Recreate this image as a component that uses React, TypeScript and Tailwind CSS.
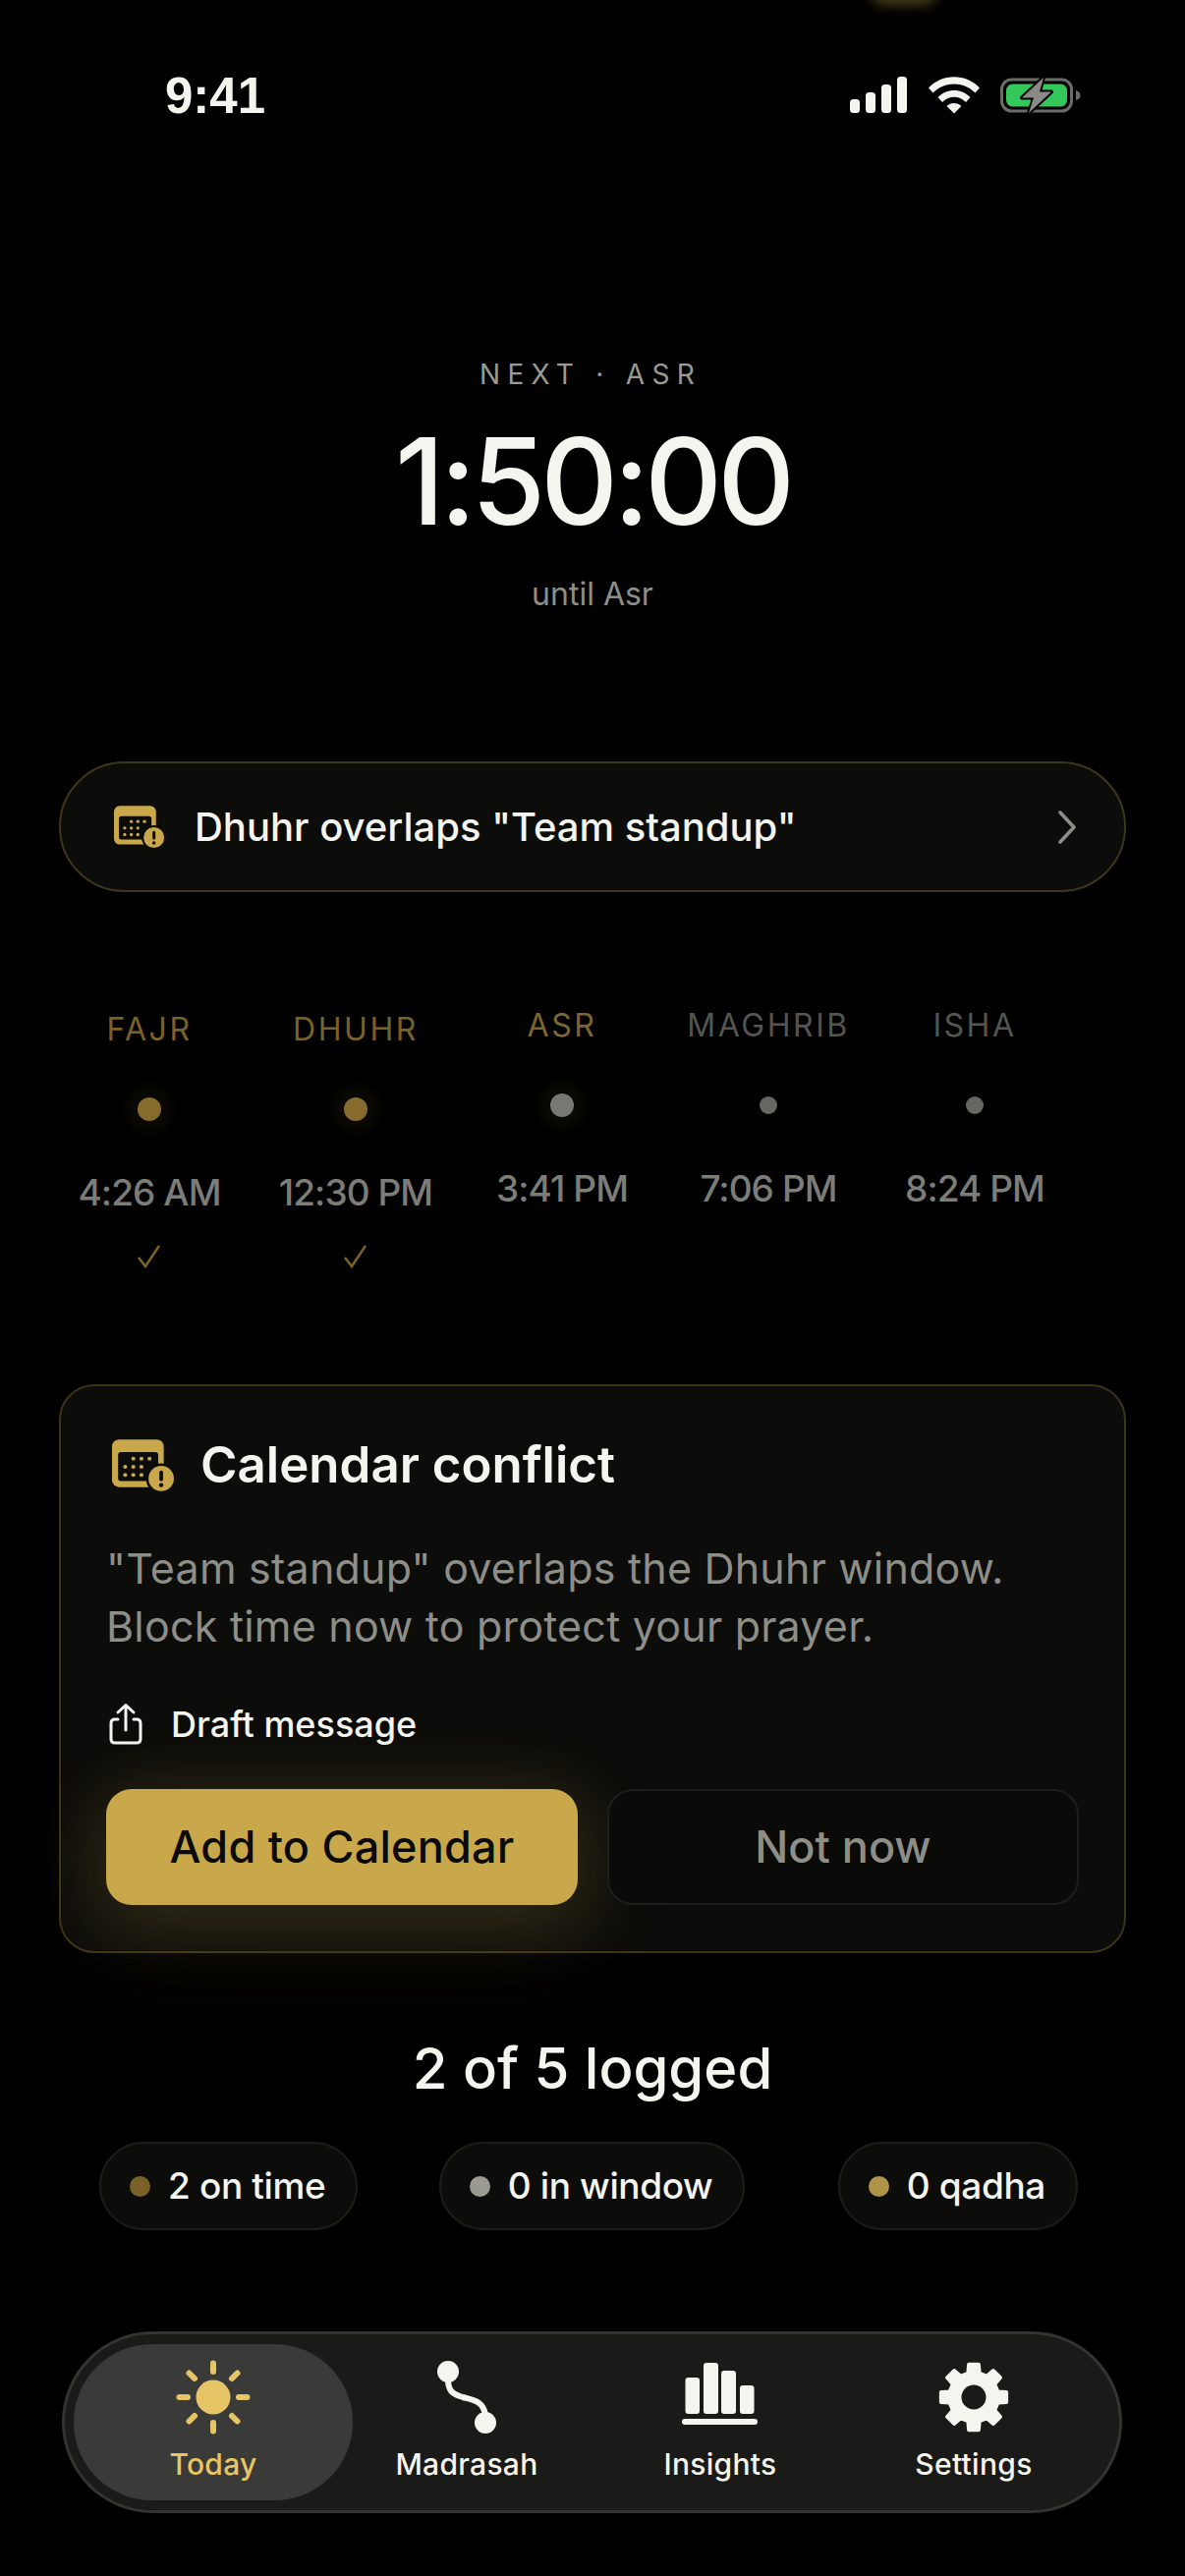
import React from 'react';

interface Prayer {
  name: string;
  time: string;
  logged: boolean;
  labelColor: string;
  dot: string;
}

const prayers: Prayer[] = [
  { name: 'FAJR', time: '4:26 AM', logged: true, labelColor: 'text-[#7a6128]', dot: 'w-[24px] h-[24px] bg-[#866b2d] shadow-[0_0_12px_12px_rgba(200,168,75,0.05)]' },
  { name: 'DHUHR', time: '12:30 PM', logged: true, labelColor: 'text-[#7a6128]', dot: 'w-[24px] h-[24px] bg-[#866b2d] shadow-[0_0_12px_12px_rgba(200,168,75,0.05)]' },
  { name: 'ASR', time: '3:41 PM', logged: false, labelColor: 'text-[#7d6630]', dot: 'w-[24px] h-[24px] bg-[#777773] shadow-[0_0_12px_12px_rgba(200,168,75,0.05)]' },
  { name: 'MAGHRIB', time: '7:06 PM', logged: false, labelColor: 'text-[#55554f]', dot: 'w-[18px] h-[18px] bg-[#666662]' },
  { name: 'ISHA', time: '8:24 PM', logged: false, labelColor: 'text-[#55554f]', dot: 'w-[18px] h-[18px] bg-[#666662]' },
];

const chips = [
  { label: '2 on time', dot: 'bg-[#7a6128]', gap: '' },
  { label: '0 in window', dot: 'bg-[#9a9a92]', gap: 'mr-[12px]' },
  { label: '0 qadha', dot: 'bg-[#b09448]', gap: '' },
];

// calendar with a small alert badge, drawn on a 62x52 box
const CalendarAlert = ({ className }: { className: string }) => (
  <svg viewBox="0 0 62 52" className={className}>
    <rect x="0" y="0" width="51" height="47" rx="7" fill="#c8a84b" />
    <rect x="6" y="12.5" width="39.5" height="28.5" rx="3" fill="#0c0c0a" />
    {[20, 28, 36].map((x) => (
      <circle key={x} cx={x + 1} cy="19" r="2" fill="#c8a84b" />
    ))}
    {[13, 21, 29].map((x) => (
      <React.Fragment key={x}>
        <circle cx={x} cy="27" r="2" fill="#c8a84b" />
        <circle cx={x} cy="35" r="2" fill="#c8a84b" />
      </React.Fragment>
    ))}
    <circle cx="48.5" cy="38.5" r="15" fill="#0c0c0a" />
    <circle cx="48.5" cy="38.5" r="12.5" fill="#c8a84b" />
    <rect x="46.7" y="30.5" width="3.6" height="10.5" rx="1.8" fill="#0c0c0a" />
    <circle cx="48.5" cy="45" r="2.1" fill="#0c0c0a" />
  </svg>
);

const SunIcon = () => (
  <svg viewBox="0 0 76 76" className="w-[76px] h-[76px]">
    <circle cx="38" cy="38" r="17.5" fill="#e6c566" />
    <g stroke="#e6c566" strokeWidth="6" strokeLinecap="round">
      <line x1="38" y1="3.5" x2="38" y2="12" />
      <line x1="38" y1="64" x2="38" y2="72.5" />
      <line x1="3.5" y1="38" x2="12" y2="38" />
      <line x1="64" y1="38" x2="72.5" y2="38" />
      <line x1="13.5" y1="13.5" x2="19" y2="19" />
      <line x1="57" y1="57" x2="62.5" y2="62.5" />
      <line x1="13.5" y1="62.5" x2="19" y2="57" />
      <line x1="57" y1="19" x2="62.5" y2="13.5" />
    </g>
  </svg>
);

const PathIcon = () => (
  <svg viewBox="0 0 62 76" className="w-[62px] h-[76px]">
    <circle cx="12" cy="12" r="11" fill="#f5f5f0" />
    <circle cx="50" cy="64" r="11" fill="#f5f5f0" />
    <path d="M12 20 C12 32 17 35 27 38 C38 41 48 42 50 56" fill="none" stroke="#f5f5f0" strokeWidth="6" />
  </svg>
);

const BarsIcon = () => (
  <svg viewBox="0 0 78 76" className="w-[78px] h-[76px]" fill="#f5f5f0">
    <rect x="3.5" y="18" width="14.5" height="37" rx="3" />
    <rect x="22" y="3" width="15" height="52" rx="3" />
    <rect x="40" y="11" width="15" height="44" rx="3" />
    <rect x="59" y="26" width="14.5" height="29" rx="3" />
    <rect x="0" y="60" width="77" height="6" rx="3" />
  </svg>
);

// 8 tooth gear, points worked out from the angle of each tooth
const gearPath = () => {
  const pt = (r: number, deg: number) => {
    const a = ((deg - 90) * Math.PI) / 180;
    return `${(38 + r * Math.cos(a)).toFixed(2)} ${(38 + r * Math.sin(a)).toFixed(2)}`;
  };
  let d = '';
  for (let i = 0; i < 8; i++) {
    const c = i * 45;
    d += `${i === 0 ? 'M' : 'L'}${pt(25, c - 13)} L${pt(33.5, c - 8.5)} L${pt(33.5, c + 8.5)} L${pt(25, c + 13)} `;
  }
  return d + 'Z';
};

const GearIcon = () => (
  <svg viewBox="0 0 76 76" className="w-[76px] h-[76px]">
    <path d={gearPath()} fill="#f5f5f0" stroke="#f5f5f0" strokeWidth="4" strokeLinejoin="round" />
    <circle cx="38" cy="38" r="12.5" fill="#1a1a18" />
  </svg>
);

const navItems = [
  { label: 'Today', icon: <SunIcon />, active: true },
  { label: 'Madrasah', icon: <PathIcon />, active: false },
  { label: 'Insights', icon: <BarsIcon />, active: false },
  { label: 'Settings', icon: <GearIcon />, active: false },
];

export default function App() {
  return (
    <div className="relative w-[1206px] h-[2622px] bg-black overflow-hidden font-['Inter',sans-serif] text-[#f5f5f0]">
      {/* bit of glow leaking in from the top edge */}
      <div className="absolute left-[885px] top-[-24px] w-[70px] h-[30px] rounded-full bg-[#6b5a2a] blur-[6px] opacity-60" />

      {/* status bar */}
      <div className="h-[194px] flex items-center justify-between pl-[168px] pr-[106px]">
        <span className="text-[51px] leading-none font-semibold font-['Liberation_Sans',sans-serif]">9:41</span>
        <div className="flex items-center">
          <svg viewBox="0 0 58 38" className="w-[58px] h-[38px] mr-[22px]" fill="#f5f5f0">
            <rect x="0" y="23" width="10" height="14" rx="3.5" />
            <rect x="16" y="16" width="10" height="21" rx="3.5" />
            <rect x="32" y="8" width="10" height="29" rx="3.5" />
            <rect x="48" y="0" width="10" height="37" rx="3.5" />
          </svg>
          <svg viewBox="0 0 52 38" className="w-[52px] h-[38px] mr-[21px]" fill="#f5f5f0">
            <path d="M0 11.5 C14 -3.5 38 -3.5 52 11.5 L47.5 16.5 C35.5 4.5 16.5 4.5 4.5 16.5 Z" />
            <path d="M9.5 21 C18.5 11.5 33.5 11.5 42.5 21 L38 26 C31 19 21 19 14 26 Z" />
            <path d="M18.5 30 C22.5 26 29.5 26 33.5 30 L26 37.5 Z" />
          </svg>
          <svg viewBox="0 0 82 38" className="w-[82px] h-[38px]">
            <rect x="1.5" y="3" width="71" height="32" rx="10" fill="none" stroke="#6b6b68" strokeWidth="3" />
            <rect x="6" y="7.5" width="62" height="23" rx="6.5" fill="#34c759" />
            <path d="M77 14 C80.5 15 81.5 17 81.5 19 C81.5 21 80.5 23 77 24 Z" fill="#6b6b68" />
            <path d="M44 1 L22 21.5 L34 21.5 L29 37 L52 15.5 L40 15.5 Z" fill="#8a8a86" stroke="#000" strokeWidth="4" strokeLinejoin="round" paintOrder="stroke" />
          </svg>
        </div>
      </div>

      {/* countdown */}
      <div className="flex flex-col items-center">
        <div className="mt-[172px] h-[30px] leading-[30px] text-[28px] tracking-[0.26em] text-[#9a9a94] mr-[4px]">NEXT · ASR</div>
        <div className="mt-[34px] h-[120px] leading-[120px] text-[122px] font-medium tracking-[-0.04em]">1:50:00</div>
        <div className="mt-[35px] h-[40px] leading-[40px] text-[32px] text-[#8e8e88]">until Asr</div>
      </div>

      {/* conflict pill */}
      <div className="mt-[150px] mx-[60px] h-[133px] rounded-full bg-[#0c0c0a] border-2 border-[#40351a] flex items-center pl-[54px] pr-[48px]">
        <CalendarAlert className="w-[52px] h-[44px]" />
        <span className="ml-[30px] flex-1 text-[40px] font-medium">Dhuhr overlaps "Team standup"</span>
        <svg viewBox="0 0 20 34" className="w-[20px] h-[34px]">
          <path d="M3 2 L17 17 L3 32" fill="none" stroke="#8e8e88" strokeWidth="3.6" strokeLinecap="round" strokeLinejoin="round" />
        </svg>
      </div>

      {/* prayer times */}
      <div className="mt-[116px] ml-[47px] w-[1050px] h-[266px] grid grid-cols-5">
        {prayers.map((p) => (
          <div key={p.name} className={`flex flex-col items-center ${p.logged ? 'pt-[4px]' : ''}`}>
            <div className={`h-[40px] leading-[40px] text-[32px] tracking-[0.08em] ${p.labelColor}`}>{p.name}</div>
            <div className="mt-[31px] h-[60px] flex items-center justify-center">
              <div className={`rounded-full ${p.dot}`} />
            </div>
            <div className="mt-[33px] h-[44px] leading-[44px] text-[37px] font-medium tracking-[-0.025em] text-[#7c7c78] whitespace-nowrap">{p.time}</div>
            {p.logged && (
              <svg viewBox="0 0 26 24" className="mt-[31px] w-[26px] h-[24px]">
                <path d="M2 13 L9 22 L23 1" fill="none" stroke="#7a6128" strokeWidth="2.6" />
              </svg>
            )}
          </div>
        ))}
      </div>

      {/* calendar conflict card */}
      <div className="mt-[119px] mx-[60px] h-[579px] rounded-[36px] bg-[#0c0c0a] border-2 border-[#3d3319] px-[46px] pt-[50px]">
        <div className="h-[60px] flex items-center">
          <CalendarAlert className="w-[64px] h-[54px] ml-[6px] mt-[2px]" />
          <span className="ml-[26px] text-[51px] font-semibold">Calendar conflict</span>
        </div>
        <p className="mt-[46px] text-[43px] leading-[59px] tracking-[0.005em] text-[#8e8e88] whitespace-nowrap">
          "Team standup" overlaps the Dhuhr window.<br />Block time now to protect your prayer.
        </p>
        <div className="mt-[48px] h-[44px] flex items-center">
          <svg viewBox="0 0 36 44" className="w-[36px] h-[44px] ml-[2px]">
            <path d="M10 17 H7 Q3 17 3 21 V37 Q3 41 7 41 H29 Q33 41 33 37 V21 Q33 17 29 17 H26 M18 28 V3 M10 10 L18 2.5 L26 10" fill="none" stroke="#f5f5f0" strokeWidth="3" strokeLinecap="round" strokeLinejoin="round" />
          </svg>
          <span className="ml-[28px] text-[36px] font-medium">Draft message</span>
        </div>
        <div className="mt-[44px] flex gap-[30px]">
          <button className="w-[480px] h-[118px] rounded-[26px] bg-[#c8a84b] text-[#0a0a08] text-[45px] font-medium tracking-[0.005em] shadow-[0_10px_70px_12px_rgba(200,168,75,0.17),0_40px_120px_20px_rgba(200,168,75,0.05)]">Add to Calendar</button>
          <button className="w-[480px] h-[118px] rounded-[26px] bg-[#0a0a08] border-2 border-[#1e1e1b] text-[#8e8e88] text-[45px] font-medium">Not now</button>
        </div>
      </div>

      {/* daily summary */}
      <div className="mt-[82px] h-[70px] leading-[70px] text-center text-[58px] font-medium">2 of 5 logged</div>
      <div className="mt-[40px] ml-[101px] w-[996px] flex justify-between">
        {chips.map((c) => (
          <div key={c.label} className={`h-[90px] rounded-full bg-[#0c0c0a] border-2 border-[#1c1c1a] flex items-center pl-[29px] pr-[31px] ${c.gap}`}>
            <span className={`w-[21px] h-[21px] rounded-full ${c.dot}`} />
            <span className="ml-[18px] text-[37px] font-medium tracking-[-0.01em]">{c.label}</span>
          </div>
        ))}
      </div>

      {/* tab bar */}
      <div className="mt-[103px] ml-[63px] w-[1079px] h-[185px] rounded-full bg-[#1a1a18] border-[3px] border-[#333331] pl-[22px] py-[10px]">
        <div className="grid grid-cols-[repeat(4,258px)] h-full">
          {navItems.map((item) => (
            <div key={item.label} className="relative flex flex-col items-center">
              {item.active && <div className="absolute inset-y-0 -inset-x-[13px] rounded-[80px] bg-[#3a3a38]" />}
              <div className="relative mt-[16px] h-[76px] flex items-center justify-center">{item.icon}</div>
              <span className={`relative mt-[10px] leading-[40px] text-[30px] font-medium tracking-[0.01em] ${item.active ? 'text-[#e6c566]' : ''}`}>{item.label}</span>
            </div>
          ))}
        </div>
      </div>
    </div>
  );
}
